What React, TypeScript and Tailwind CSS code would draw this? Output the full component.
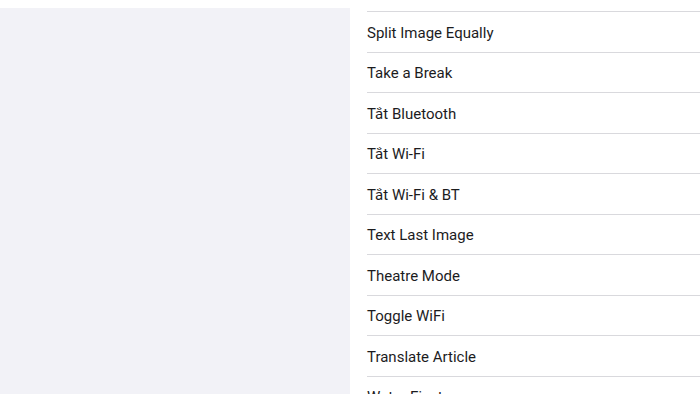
import React from "react";

const items = [
  "Split Image Equally",
  "Take a Break",
  "Tắt Bluetooth",
  "Tắt Wi-Fi",
  "Tắt Wi-Fi & BT",
  "Text Last Image",
  "Theatre Mode",
  "Toggle WiFi",
  "Translate Article",
  "Water Eject",
];

export default function App() {
  return (
    <div
      className="flex h-[394px] w-[700px] overflow-hidden bg-white"
      style={{ fontFamily: "Roboto, 'Noto Sans', sans-serif" }}
    >
      <div className="w-[350px] shrink-0 pt-[8px] bg-white">
        <div className="h-full bg-[#f2f2f7]" />
      </div>
      <div className="flex-1 bg-white pl-[17px]">
        <div className="h-[12px] border-b border-[#d9d9dd]" />
        {items.map((t) => (
          <div
            key={t}
            className="flex h-[40.5px] items-center border-b border-[#d9d9dd] pt-[2px] text-[15px] text-[#1c1c1e]"
          >
            {t}
          </div>
        ))}
      </div>
    </div>
  );
}
